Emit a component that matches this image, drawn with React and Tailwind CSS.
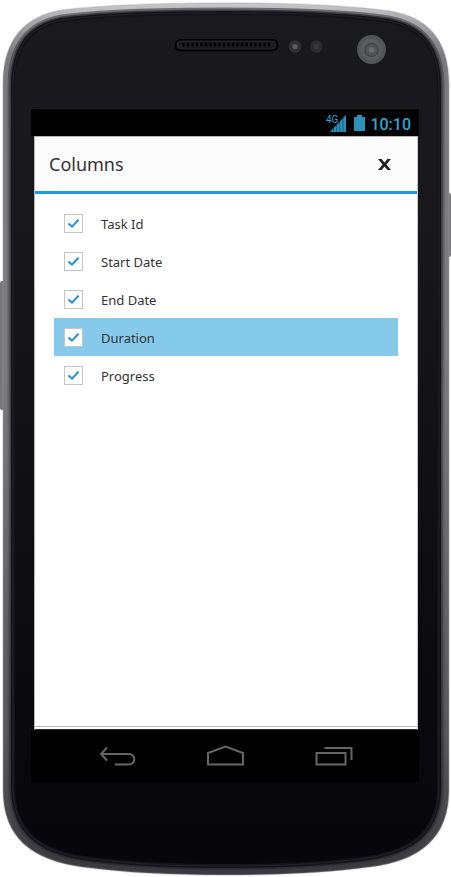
import { useState } from "react";

const OUTER =
  "M3 84C3 38 26 16 62 10C105 5 165 3 226 3C287 3 347 5 390 11C426 17 449 38 449 84V790C449 838 420 861 370 867C325 873 278 875 226 875C174 875 127 873 82 867C32 860 3 838 3 790Z";
const INNER =
  "M13 86C13 47 30 26 62 20C105 14 165 13 226 13C287 13 347 14 388 21C421 27 439 47 439 86V786C439 831 414 851 368 858C325 864 278 866 226 866C174 866 127 864 84 858C38 851 13 831 13 786Z";

const HOLES = Array.from({ length: 20 }, (_, i) => 183.5 + i * 4.5);

function PhoneBody() {
  return (
    <svg
      className="absolute inset-0 h-full w-full"
      viewBox="0 0 451 877"
      preserveAspectRatio="none"
      aria-hidden="true"
    >
      <defs>
        <linearGradient id="rim" x1="0" y1="0" x2="0" y2="1">
          <stop offset="0" stopColor="#c9c9cc" />
          <stop offset="0.02" stopColor="#a9a9ad" />
          <stop offset="0.06" stopColor="#7a7a7e" />
          <stop offset="0.4" stopColor="#7d7d81" />
          <stop offset="0.85" stopColor="#56565b" />
          <stop offset="1" stopColor="#3a393f" />
        </linearGradient>
        <linearGradient id="rimMiddle" x1="0" y1="0" x2="0" y2="1">
          <stop offset="0" stopColor="#6d6d71" />
          <stop offset="0.05" stopColor="#58585c" />
          <stop offset="0.5" stopColor="#67676b" />
          <stop offset="1" stopColor="#3a393f" />
        </linearGradient>
        <linearGradient id="rimInner" x1="0" y1="0" x2="0" y2="1">
          <stop offset="0" stopColor="#3a3a3e" />
          <stop offset="0.5" stopColor="#444448" />
          <stop offset="1" stopColor="#2c2b31" />
        </linearGradient>
        <linearGradient id="face" x1="0" y1="0" x2="0" y2="1">
          <stop offset="0" stopColor="#1a191e" />
          <stop offset="0.3" stopColor="#17161b" />
          <stop offset="0.8" stopColor="#09090e" />
          <stop offset="1" stopColor="#06060b" />
        </linearGradient>
      </defs>
      <rect x="0" y="281" width="6" height="129" rx="2" fill="#77777a" />
      <rect x="445" y="193" width="6" height="64" rx="2" fill="#77777a" />
      <path d={OUTER} fill="url(#rim)" />
      <path d={OUTER} fill="none" stroke="#9d9da1" strokeOpacity="0.35" strokeWidth="1.5" />
      <path d={INNER} fill="none" stroke="url(#rimMiddle)" strokeWidth="11" />
      <path d={INNER} fill="none" stroke="url(#rimInner)" strokeWidth="7" />
      <path d={INNER} fill="url(#face)" stroke="#141418" strokeWidth="4" />
      <path d={INNER} fill="none" stroke="#29292e" strokeWidth="0.7" />

      <rect x="174.5" y="39" width="104" height="12.5" rx="6" fill="#000" />
      <rect x="177" y="41" width="99" height="8" rx="4" fill="#1c1c20" stroke="#2c2c31" strokeWidth="0.8" />
      {HOLES.map((x) => (
        <rect key={x} x={x - 1.2} y="42.5" width="2.4" height="4" rx="1" fill="#020204" />
      ))}
      <circle cx="295" cy="46.5" r="6.3" fill="#303034" />
      <circle cx="295" cy="46.5" r="2.6" fill="#5c5d61" />
      <circle cx="316.5" cy="46.5" r="6.3" fill="#2b2b2f" />
      <circle cx="316.5" cy="46.5" r="3" fill="#36363b" />
      <circle cx="371.5" cy="49.5" r="14.5" fill="#535457" />
      <circle cx="371.5" cy="49.5" r="11" fill="#5a5b5e" />
      <circle cx="371.5" cy="50" r="6.5" fill="#545558" stroke="#434447" strokeWidth="1.3" />
      <circle cx="371.5" cy="50" r="2.8" fill="#6b6c6f" />
    </svg>
  );
}

function StatusBar() {
  return (
    <div className="flex h-[27px] items-center justify-end bg-black pr-2 font-['Roboto','Liberation_Sans',sans-serif] text-[#2fa3d2]">
      <div className="flex h-5 items-start pt-0.5">
        <span className="text-[10px] leading-[10px]">4G</span>
        <svg className="-ml-2 h-[17px] w-4" viewBox="0 0 16 17" aria-hidden="true">
          <path d="M0 17L16 0V17Z" fill="#1b5f7b" />
          <g fill="#2a8fb9">
            <path d="M0 17L3 14V17Z" />
            <path d="M4 12.8L6 10.7V17H4Z" />
            <path d="M7 9.6L9.2 7.3V17H7Z" />
            <path d="M10.2 6.2L12.5 3.8V17H10.2Z" />
            <path d="M13.5 2.7L16 0V17H13.5Z" />
          </g>
        </svg>
      </div>
      <svg className="ml-2 h-4 w-[11px]" viewBox="0 0 11 16" aria-hidden="true">
        <path d="M3 0H8V2H11V16H0V2H3Z" fill="#2c91bb" />
      </svg>
      <time className="ml-[5px] pt-1 text-base leading-5 font-medium">10:10</time>
    </div>
  );
}

function ColumnRow({ label, selected, onSelect }) {
  const [checked, setChecked] = useState(true);
  return (
    <li>
      <label
        onClick={onSelect}
        className={`flex h-[38px] items-center px-2.5 ${selected ? "bg-[#85caea]" : ""}`}
      >
        <span className="grid place-items-center">
          <input
            type="checkbox"
            checked={checked}
            onChange={(e) => setChecked(e.target.checked)}
            className="peer col-start-1 row-start-1 h-[19px] w-[19px] appearance-none border border-[#c5c5c5] bg-white"
          />
          <svg
            className="pointer-events-none invisible col-start-1 row-start-1 h-[11px] w-[13px] peer-checked:visible"
            viewBox="0 0 13 11"
            aria-hidden="true"
          >
            <path d="M1.5 5.5L5 8.7L11.5 1.8" fill="none" stroke="#1f91d8" strokeWidth="2" />
          </svg>
        </span>
        <span className="ml-[18px] pt-0.5 text-[13px] leading-5">{label}</span>
      </label>
    </li>
  );
}

function ColumnChooser() {
  const columns = ["Task Id", "Start Date", "End Date", "Duration", "Progress"];
  const [selected, setSelected] = useState("Duration");
  return (
    <main className="mr-px ml-[3px] flex grow flex-col border border-t-[#b5b5b5] border-r-[#c8c8c8] border-b-[#233040] border-l-[#b5b5b5] bg-white pb-0.5 text-[#333]">
      <div className="flex grow flex-col border-b border-[#bdbdbd]">
        <header className="flex h-[57px] items-center justify-between border-b-[3px] border-[#1e9ad6] bg-[#fcfcfc] pr-[26px] pl-3.5">
          <h1 className="text-lg leading-6">Columns</h1>
          <button type="button" aria-label="Close" className="flex h-5 w-[13px] items-center">
            <svg className="h-[11px] w-[13px]" viewBox="0 0 13 11" aria-hidden="true">
              <path d="M0 0H3.6L6.5 3.5L9.4 0H13L8.4 5.5L13 11H9.4L6.5 7.5L3.6 11H0L4.6 5.5Z" fill="#222" />
            </svg>
          </button>
        </header>
        <ul className="px-[19px] pt-2.5">
          {columns.map((name) => (
            <ColumnRow
              key={name}
              label={name}
              selected={selected === name}
              onSelect={() => setSelected(name)}
            />
          ))}
        </ul>
      </div>
    </main>
  );
}

function NavBar() {
  return (
    <nav className="flex h-[52px] items-center justify-between bg-black pr-[66px] pl-[67px] text-[#666]">
      <button type="button" aria-label="Back" className="w-[38px]">
        <svg className="h-[22px] w-[38px]" viewBox="0 0 38 22" fill="none" stroke="currentColor" strokeWidth="2" aria-hidden="true">
          <path d="M9 2.5L3 9L9 15.5M3 9H31A5.2 5.2 0 0 1 31 19.5H17" />
        </svg>
      </button>
      <button type="button" aria-label="Home" className="w-[38px]">
        <svg className="h-[22px] w-[38px]" viewBox="0 0 38 22" fill="none" stroke="currentColor" strokeWidth="2" aria-hidden="true">
          <path d="M1 19.5V8L18.5 1.5L36 8V19.5Z" />
        </svg>
      </button>
      <button type="button" aria-label="Recent apps" className="w-[38px]">
        <svg className="h-[22px] w-[38px]" viewBox="0 0 38 22" fill="none" stroke="currentColor" strokeWidth="2" aria-hidden="true">
          <path d="M1.5 8H30.5V19.5H1.5Z" />
          <path d="M9.5 3H36.5V15" />
        </svg>
      </button>
    </nav>
  );
}

export default function App() {
  return (
    <div className="relative flex min-h-screen flex-col bg-white pt-[109px] pr-8 pb-[95px] pl-[31px] font-['Noto_Sans','Open_Sans',sans-serif]">
      <PhoneBody />
      <div className="relative flex grow flex-col overflow-hidden rounded-xs">
        <StatusBar />
        <ColumnChooser />
        <NavBar />
      </div>
    </div>
  );
}
